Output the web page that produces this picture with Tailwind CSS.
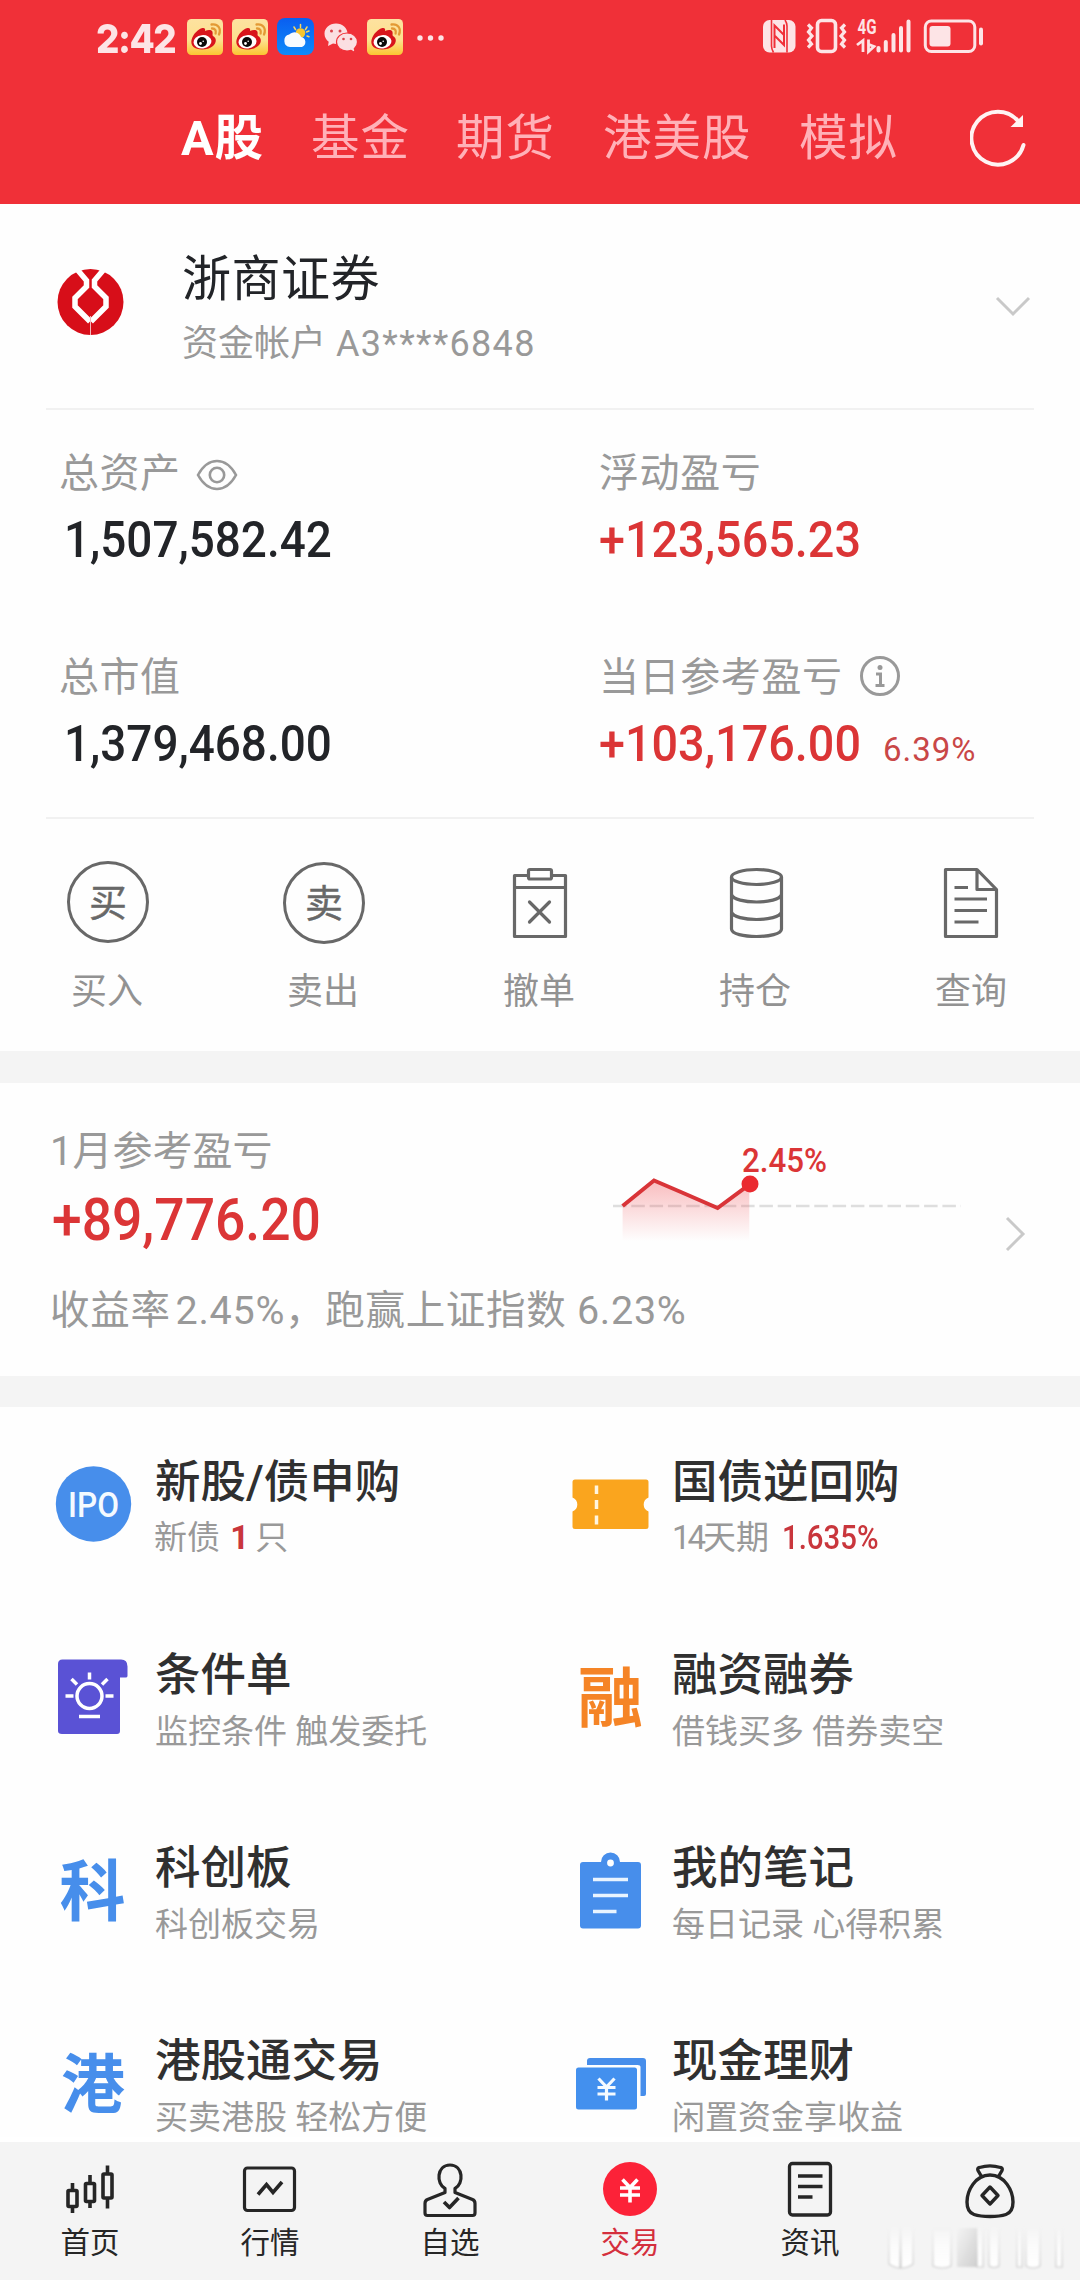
<!DOCTYPE html>
<html lang="zh-CN">
<head>
<meta charset="utf-8">
<title>交易</title>
<script src="https://cdn.jsdelivr.net/npm/@tailwindcss/browser@4"></script>
</head>
<body class="w-[1080px] h-[2280px] overflow-hidden bg-[#fefefe] font-[Roboto,'Noto_Sans_CJK_SC',sans-serif] whitespace-nowrap">
<svg width="0" height="0" class="absolute">
  <defs>
    <linearGradient id="wbg" x1="0" y1="0" x2="0" y2="1"><stop offset="0" stop-color="#fde2a0"/><stop offset=".6" stop-color="#fde08e"/><stop offset="1" stop-color="#fbc531"/></linearGradient>
    <linearGradient id="sky" x1="0" y1="0" x2="0" y2="1"><stop offset="0" stop-color="#0a5ef0"/><stop offset="1" stop-color="#0d8bfa"/></linearGradient>
    <linearGradient id="area" x1="0" y1="0" x2="0" y2="1"><stop offset="0" stop-color="#f04a50" stop-opacity=".36"/><stop offset="1" stop-color="#f04a50" stop-opacity="0"/></linearGradient>
    <symbol id="weibo" viewBox="0 0 36 36">
      <rect width="36" height="36" rx="4.5" fill="url(#wbg)"/>
      <path d="M4.500 21C6 15 11 10 15.500 9C18 8.500 18.500 10.500 18 12C21 10.500 25 10.500 25.500 13C26 15 25 16 26 17C30 19 29.500 24 26 27C21 31.500 10 31.500 6.500 28C4.500 26 4 23.500 4.500 21Z" fill="#d8151c"/>
      <ellipse cx="15.500" cy="22.800" rx="9" ry="6.700" fill="#fff" transform="rotate(-6 15.5 22.8)"/>
      <circle cx="15" cy="23" r="5" fill="#0a0a0a"/><circle cx="13.500" cy="24.500" r="1.400" fill="#fff"/><circle cx="16.200" cy="22.300" r=".8" fill="#fff"/>
      <path d="M25 9.500C28 9.300 29.500 11.500 28.600 14.500M24.500 5.500C31 4.500 34.500 9.500 32 15.500" fill="none" stroke="#e39a35" stroke-width="2.300" stroke-linecap="round"/>
    </symbol>
  </defs>
</svg>

<header class="h-[204px] bg-[#f03038]">
  <div class="flex h-[76px] items-center pl-[96px] pr-[96px] text-[#fde4e6]">
    <span class="w-[91px] text-[40px] leading-[40px] font-extrabold font-[Inter,sans-serif] tracking-[-1.6px] -translate-y-px mt-1"><span class="inline-block origin-left scale-x-[.92]">2:42</span></span>
    <svg class="w-9 h-9 mt-[-3px]"><use href="#weibo"/></svg>
    <svg class="w-9 h-9 mt-[-3px] ml-[9px]"><use href="#weibo"/></svg>
    <svg class="w-[37px] h-[37px] mt-[-3px] ml-[9px]" viewBox="0 0 37 37">
      <rect width="37" height="37" rx="8" fill="url(#sky)"/>
      <g stroke="#f5d565" stroke-width="1.500" stroke-linecap="round"><path d="M23.500 6.500v3M17 9l1.500 2.500M30 9l-1.500 2.500M30 18l2 .8M29.500 14l2.500-1"/></g>
      <circle cx="23.500" cy="15" r="4.800" fill="#f7c52f"/>
      <path d="M13 29a6.300 6.300 0 0 1-.8-12.400 7 7 0 0 1 11.800 2.400 5.200 5.200 0 0 1 1 10z" fill="#f6fbff"/>
    </svg>
    <svg class="w-[34px] h-[32px] ml-[10px] -mt-px" viewBox="0 0 34 32">
      <path d="M12 1.500C5.500 1.500.5 6 .5 11.700c0 3.400 1.700 6.200 4.200 8L4 24l5-2.500c5.500 1.500 14.500-1 14.500-9.800C23.500 6 18.500 1.500 12 1.500Z" fill="#fbdfe2"/>
      <path d="M23 11c-6 0-10.500 4-10.500 9s4.500 9 10.500 9c1.500 0 2.700-.2 4-.7l4.300 2.500-1-4C32.300 25 33.500 22.700 33.500 20c0-5-4.500-9-10.500-9Z" fill="#fbdfe2" stroke="#f03038" stroke-width="1.200"/>
      <g fill="#d9444c"><circle cx="7.500" cy="9" r="1.500"/><circle cx="16" cy="9" r="1.500"/><circle cx="19.500" cy="17" r="1.300"/><circle cx="27" cy="17" r="1.300"/></g>
    </svg>
    <svg class="w-9 h-9 mt-[-3px] ml-[9px]"><use href="#weibo"/></svg>
    <svg class="w-7 h-2 ml-[14px]" viewBox="0 0 28 8" fill="#fde4e6"><circle cx="3" cy="4" r="2.700"/><circle cx="13.500" cy="4" r="2.700"/><circle cx="24" cy="4" r="2.700"/></svg>
    <svg class="w-[224px] h-[38px] ml-auto mr-[-3px] -mt-1" viewBox="0 0 224 38" fill="none">
      <rect x="0" y="3" width="32.500" height="32.500" rx="6.500" fill="#fde4e6"/>
      <path d="M8.500 3v26q0 3 2 6.500M24 35.500V9q0-3-2-6" stroke="#f03038" stroke-width="1.600"/>
      <path d="M11.500 31V8.500l10 10M21 7.500v20.500l-9-9" stroke="#f03038" stroke-width="2"/>
      <rect x="54.500" y="3.500" width="18" height="31" rx="4" stroke="#fde4e6" stroke-width="3.600"/>
      <path d="M45 7.500l3.500 3.500-3 4 3.500 4-3.500 4 3 4-3.500 3.500M82 7.500l-3.500 3.500 3 4-3.500 4 3.500 4-3 4 3.500 3.500" stroke="#fde4e6" stroke-width="3.200"/>
      <text x="94.500" y="16.500" font-size="20" font-weight="700" font-family="Roboto" fill="#fde4e6" textLength="19" lengthAdjust="spacingAndGlyphs">4G</text>
      <path d="M94 28l6-4.500v11.500M105.500 22.500v12l5.500-5-5-2" stroke="#fde4e6" stroke-width="2.800"/>
      <path d="M115.500 31v2.500M122.800 25v8.500M130.500 18v15.500M138 11v22.500M145.500 4.500v29" stroke="#fde4e6" stroke-width="4" stroke-linecap="round"/>
      <rect x="162.300" y="4" width="49.500" height="30.500" rx="6" stroke="#fde4e6" stroke-width="3"/>
      <rect x="166.500" y="9" width="21" height="20.500" rx="3" fill="#fde4e6"/>
      <path d="M218 12.500v14" stroke="#fde4e6" stroke-width="4" stroke-linecap="round"/>
    </svg>
  </div>
  <nav class="flex items-center h-[124px] pt-[2px] pl-[181px] text-[48.500px] leading-[60px] tracking-[1px] text-[#ffb1b8]">
    <span class="text-white font-bold w-[130px]">A股</span>
    <span class="w-[145px]">基金</span>
    <span class="w-[147px]">期货</span>
    <span class="w-[196px]">港美股</span>
    <span class="w-[171px]">模拟</span>
    <svg class="w-[60px] h-[60px] -mt-[2px]" viewBox="0 0 60 60" fill="none"><path d="M53.500 37A26.500 26.500 0 1 1 48.500 13.500" stroke="#fff3f3" stroke-width="4" stroke-linecap="round"/><path d="M53 7v12H40.500z" fill="#fff3f3"/></svg>
  </nav>
</header>

<section class="h-[847px]">
  <div class="flex h-[206px] mx-[46px] border-b-2 border-[#f1f1f1]">
    <svg class="w-[68px] h-[68px] ml-[10px] mt-[64px]" viewBox="0 0 68 68">
      <circle cx="34.500" cy="34" r="33" fill="#d70e19"/>
      <path d="M22 2.500L30.500 12.500V18.500L19 30V38.500L34 53.500M47 2.500L38.500 12.500V18.500L50 30V38.500L35 53.500" fill="none" stroke="#fff" stroke-width="5.500"/>
      <path d="M34.500 48v19" stroke="#f3b6ba" stroke-width="1"/>
    </svg>
    <div class="ml-[58px] pt-[44px]">
      <div class="text-[49px] leading-[64px] text-[#222428] tracking-[.5px]">浙商证券</div>
      <div class="text-[36px] leading-[60px] text-[#999] mt-[2px]">资金帐户<span class="ml-[10px] tracking-[1.3px]">A3****6848</span></div>
    </div>
    <svg class="w-9 h-6 ml-auto mr-[3px] mt-[90px]" viewBox="0 0 36 24" fill="none" stroke="#c9c9c9" stroke-width="3"><path d="M2 4l16 16L34 4"/></svg>
  </div>

  <div class="grid grid-cols-[540px_1fr] grid-rows-[204px_1fr] mx-[46px] h-[409px] border-b-2 border-[#f1f1f1] pl-[13px]">
    <div class="pt-[37px]">
      <div class="flex items-center gap-[15px] text-[40px] leading-[54px] text-[#999] tracking-[.5px]">总资产
        <svg class="w-[42px] h-[32px] mt-px" viewBox="0 0 42 32" fill="none" stroke="#999" stroke-width="2.600"><path d="M2 16C8 5 15 2 21 2s13 3 19 14c-6 11-13 14-19 14S8 27 2 16Z"/><circle cx="21" cy="16" r="7.200"/></svg>
      </div>
      <div class="mt-[7px] pl-[5px] text-[50px] leading-[64px] font-medium text-[#222428]"><span class="inline-block origin-left scale-x-[.917]">1,507,582.42</span></div>
    </div>
    <div class="pt-[37px]">
      <div class="text-[40px] leading-[54px] text-[#999] tracking-[.6px]">浮动盈亏</div>
      <div class="mt-[7px] text-[50px] leading-[64px] font-medium text-[#db3536]"><span class="inline-block origin-left scale-x-[.935]">+123,565.23</span></div>
    </div>
    <div class="pt-[37px]">
      <div class="text-[40px] leading-[54px] text-[#999] tracking-[.5px]">总市值</div>
      <div class="mt-[7px] pl-[5px] text-[50px] leading-[64px] font-medium text-[#222428]"><span class="inline-block origin-left scale-x-[.917]">1,379,468.00</span></div>
    </div>
    <div class="pt-[37px]">
      <div class="flex items-center gap-[16px] text-[40px] leading-[54px] text-[#999] tracking-[.6px]">当日参考盈亏
        <svg class="w-[42px] h-[42px] -mt-1" viewBox="0 0 42 42" fill="none" stroke="#999" stroke-width="3"><circle cx="21" cy="21" r="18.500"/><path d="M17 19h4.500v11M16.500 30.500h9"/><circle cx="21" cy="12.500" r="2.500" fill="#999" stroke="none"/></svg>
      </div>
      <div class="flex items-baseline mt-[7px] text-[50px] leading-[64px] font-medium text-[#db3536]"><span class="w-[284px]"><span class="inline-block origin-left scale-x-[.935]">+103,176.00</span></span><span class="text-[33px] font-normal text-[#c94747] tracking-[1px]">6.39%</span></div>
    </div>
  </div>

  <div class="grid grid-cols-5 pt-[39px] text-center text-[36px] leading-[50px] text-[#929292] [&_svg]:mx-auto [&_svg]:mb-[21px]">
    <div><svg class="w-[88px] h-[88px]" viewBox="0 0 88 88"><circle cx="44" cy="44" r="39.500" fill="none" stroke="#686868" stroke-width="3"/><text x="44" y="58" text-anchor="middle" font-size="38" fill="#686868" stroke="#686868" stroke-width=".4">买</text></svg><span class="-ml-[2px]">买入</span></div>
    <div><svg class="w-[88px] h-[88px]" viewBox="0 0 88 88"><circle cx="44" cy="45" r="39.500" fill="none" stroke="#686868" stroke-width="3"/><text x="44" y="59" text-anchor="middle" font-size="38" fill="#686868" stroke="#686868" stroke-width=".4">卖</text></svg><span class="-ml-[2px]">卖出</span></div>
    <div><svg class="w-[88px] h-[88px]" viewBox="0 0 88 88" fill="none" stroke="#686868" stroke-width="3.200"><path d="M31.500 17.500H18.500v61h51v-61H57M18.500 29.500h51M33.500 44l20 20M53.500 44l-20 20" stroke-linejoin="round" stroke-linecap="round"/><rect x="32.500" y="11.500" width="23" height="9.500" rx="1.500"/></svg><span class="-ml-[2px]">撤单</span></div>
    <div><svg class="w-[88px] h-[88px]" viewBox="0 0 88 88" fill="none" stroke="#686868" stroke-width="3.200"><ellipse cx="44.500" cy="19" rx="25" ry="7.500"/><path d="M19.500 19v52c0 10 50 10 50 0V19M19.500 36.500c3 10 47 10 50 0M19.500 54c3 10 47 10 50 0"/></svg><span class="-ml-[2px]">持仓</span></div>
    <div><svg class="w-[88px] h-[88px]" viewBox="0 0 88 88" fill="none" stroke="#686868" stroke-width="3.200" stroke-linejoin="round"><path d="M17.500 11.500H49L68.500 31.500V78.500H17.500zM49 11.500v20h19.500M26.500 29.500h13.500M26.500 41h32.500M26.500 52.500h32.500M26.500 64h24"/></svg><span class="-ml-[2px]">查询</span></div>
  </div>
</section>

<section class="h-[356px] border-t-[32px] border-b-[31px] border-[#f4f4f4] box-border flex items-start">
  <div class="w-[570px] pl-[50px] pt-[40px]">
    <div class="text-[40px] leading-[58px] text-[#999]">1月参考盈亏</div>
    <div class="mt-[2px] pl-[2px] text-[59px] leading-[74px] font-medium text-[#db3536]"><span class="inline-block origin-left scale-x-[.905]">+89,776.20</span></div>
    <div class="mt-[24px] text-[39.500px] leading-[60px] text-[#999] tracking-[.7px]">收益率<span class="ml-[5px]">2.45%</span>，跑赢上证指数 <span>6.23%</span></div>
  </div>
  <svg class="w-[360px] h-[120px] ml-[38px] mt-[47px]" viewBox="608 1130 360 120">
    <path d="M613 1206H961" stroke="#dedede" stroke-width="2.500" stroke-dasharray="13.500 4.800"/>
    <path d="M622.600 1207L654 1181L682 1193.500L717.600 1209.500L749.300 1185.700V1241H622.600z" fill="url(#area)"/>
    <path d="M622.600 1206L654 1180.500L682 1192.500L717.600 1208L749.300 1184.700" fill="none" stroke="#d93438" stroke-width="4"/>
    <circle cx="750" cy="1184" r="8.500" fill="#ea2a30"/>
    <text x="742" y="1172" font-size="33" font-weight="500" font-family="Roboto" fill="#db3536" textLength="85" lengthAdjust="spacingAndGlyphs">2.45%</text>
  </svg>
  <svg class="w-6 h-9 ml-[36px] mt-[133px]" viewBox="0 0 24 36" fill="none" stroke="#c9c9c9" stroke-width="3"><path d="M3 2l16 16L3 34"/></svg>
</section>

<main class="grid grid-cols-[517px_1fr] auto-rows-[193px] h-[730px] overflow-hidden text-[33px] leading-[54px] text-[#999]">
  <div class="flex pl-[53px]">
    <svg class="w-[80px] h-[80px] mt-[57px]" viewBox="0 0 80 80"><circle cx="40.500" cy="40" r="37.700" fill="#478eeb"/><text x="40.500" y="52.500" text-anchor="middle" font-size="35" font-weight="500" font-family="Roboto" fill="#f4faff" textLength="51" lengthAdjust="spacingAndGlyphs">IPO</text></svg>
    <div class="ml-[22px] pt-[47px]"><div class="text-[45.500px] leading-[58px] font-medium text-[#303030]">新股/债申购</div><div class="-mt-px -ml-px">新债 <b class="font-bold text-[#c9363c] ml-[2px] mr-[-2px]">1</b> 只</div></div>
  </div>
  <div class="flex pl-[53px]">
    <svg class="w-[80px] h-[80px] mt-[57px]" viewBox="0 0 80 80"><path d="M5 15.500H76q2.500 0 2.500 2.500V33.500a7.500 7.500 0 0 0 0 14V62.500q0 2.500-2.500 2.500H5q-2.500 0-2.500-2.500V47.500a7.500 7.500 0 0 0 0-14V18Q2.500 15.500 5 15.500Z" fill="#faa51e"/><path d="M26.500 21.500v8.500M26.500 36v9M26.500 51.500v9" stroke="#fff5df" stroke-width="3.500"/></svg>
    <div class="ml-[22px] pt-[47px]"><div class="text-[45.500px] leading-[58px] font-medium text-[#303030]">国债逆回购</div><div class="-mt-px"><span class="tracking-[-3px]">14</span>天期 <b class="inline-block origin-left scale-x-[.89] font-medium text-[#c9363c] ml-[5px]">1.635%</b></div></div>
  </div>
  <div class="flex pl-[53px]">
    <svg class="w-[80px] h-[80px] mt-[57px]" viewBox="0 0 80 80"><path d="M9.500 2.500H68q6.500 0 6.500 7V19q0 1.500-2 1.500h-5.500V74q0 3-3 3H9q-4 0-4-3V7q0-4.500 4.500-4.500Z" fill="#5a52d5"/><g fill="none" stroke="#fff" stroke-width="3.500"><circle cx="36.500" cy="39" r="12.500"/><path d="M36.500 15.500v7M18.500 22l5.500 5.500M54.500 22l-5.500 5.500M12.500 39h8M52.500 39h8M26 59.500h21"/></g></svg>
    <div class="ml-[22px] pt-[47px]"><div class="text-[45.500px] leading-[58px] font-medium text-[#303030]">条件单</div>监控条件 触发委托</div>
  </div>
  <div class="flex pl-[53px]">
    <svg class="w-[80px] h-[80px] mt-[57px]" viewBox="0 0 80 80"><text x="40.500" y="64" text-anchor="middle" font-size="65" font-weight="700" fill="#f58426">融</text></svg>
    <div class="ml-[22px] pt-[47px]"><div class="text-[45.500px] leading-[58px] font-medium text-[#303030]">融资融券</div>借钱买多 借券卖空</div>
  </div>
  <div class="flex pl-[53px]">
    <svg class="w-[80px] h-[80px] mt-[57px]" viewBox="0 0 80 80"><text x="39.500" y="65" text-anchor="middle" font-size="66" font-weight="700" fill="#478eeb">科</text></svg>
    <div class="ml-[22px] pt-[47px]"><div class="text-[45.500px] leading-[58px] font-medium text-[#303030]">科创板</div>科创板交易</div>
  </div>
  <div class="flex pl-[53px]">
    <svg class="w-[80px] h-[80px] mt-[57px]" viewBox="0 0 80 80"><path d="M13 12H31a9.500 9.500 0 0 1 19 0H68q3 0 3 3V75.500q0 3-3 3H13q-3 0-3-3V15q0-3 3-3Z" fill="#478eeb"/><circle cx="40.500" cy="13" r="3.400" fill="#fff"/><path d="M23 29.500h35M23 45.500h35M23 61.500h23.500" stroke="#e9f4ff" stroke-width="3.300"/></svg>
    <div class="ml-[22px] pt-[47px]"><div class="text-[45.500px] leading-[58px] font-medium text-[#303030]">我的笔记</div>每日记录 心得积累</div>
  </div>
  <div class="flex pl-[53px]">
    <svg class="w-[80px] h-[80px] mt-[57px]" viewBox="0 0 80 80"><text x="40" y="64" text-anchor="middle" font-size="64" font-weight="700" fill="#478eeb">港</text></svg>
    <div class="ml-[22px] pt-[47px]"><div class="text-[45.500px] leading-[58px] font-medium text-[#303030]">港股通交易</div>买卖港股 轻松方便</div>
  </div>
  <div class="flex pl-[53px]">
    <svg class="w-[80px] h-[80px] mt-[57px]" viewBox="0 0 80 80"><path d="M17 22v-4q0-3 3-3H73q3 0 3 3V51q0 2-2 2h-3.500V24q0-2-3-2z" fill="#478eeb"/><rect x="6" y="24.500" width="61" height="42" rx="2.500" fill="#4390ee"/><path d="M28.500 35.500l8 8.500 8-8.500M36.500 43v14.500M27.500 44.500h18M27.500 51h18" fill="none" stroke="#f4faff" stroke-width="3.200"/></svg>
    <div class="ml-[22px] pt-[47px]"><div class="text-[45.500px] leading-[58px] font-medium text-[#303030]">现金理财</div>闲置资金享收益</div>
  </div>
</main>

<footer class="relative h-[143px] border-t-[5px] border-white bg-[#f4f4f4] grid grid-cols-6 pt-[17px] text-center text-[29.500px] leading-[44px] text-[#262626] [&_svg]:mx-auto [&_svg]:mb-[-2px]">
  <div><svg class="w-[64px] h-[64px]" viewBox="0 0 64 64" fill="none" stroke="#262626" stroke-width="3.600"><rect x="10" y="31.500" width="9" height="16" rx="1"/><rect x="27.500" y="24.500" width="9" height="18" rx="1"/><rect x="45" y="15" width="9" height="24" rx="1"/><path d="M14.500 24v7M14.500 48v6M32 16v8M32 43v6M49.500 6.500v8M49.500 39v10.500"/></svg>首页</div>
  <div><svg class="w-[64px] h-[64px]" viewBox="0 0 64 64" fill="none" stroke="#262626" stroke-width="3.200"><rect x="6.500" y="9" width="50" height="42.500" rx="3"/><path d="M20 35.500l8.500-10L35 33.500l9-10.500" stroke-width="3.600"/></svg>行情</div>
  <div><svg class="w-[64px] h-[64px]" viewBox="0 0 64 64" fill="none" stroke="#262626" stroke-width="3.200" stroke-linejoin="round"><path d="M27 29.500C18 25 18.500 6 32 6s14 19 5 23.500v4l17.500 7q2.500 1 2.500 4V54q0 2.500-2.500 2.500H9.500Q7 56.500 7 54V44.500q0-3 2.500-4l17.500-7z"/><path d="M26 43l5.500 5.500L40.500 39" stroke-width="3.600"/></svg>自选</div>
  <div class="text-[#d42f3d]"><svg class="w-[64px] h-[64px]" viewBox="0 0 64 64"><circle cx="32" cy="30" r="27" fill="#fc2238"/><path d="M24.500 20.500l7.500 8 7.500-8M32 28v15.500M22 29h20M22 36h20" fill="none" stroke="#fff" stroke-width="3.600"/></svg>交易</div>
  <div><svg class="w-[64px] h-[64px]" viewBox="0 0 64 64" fill="none" stroke="#262626" stroke-width="3.300"><rect x="11.500" y="4.500" width="41" height="51.500" rx="3"/><path d="M20 17h24.500M20 27.500h24.500M20 38h14.500"/></svg>资讯</div>
  <div><svg class="w-[64px] h-[64px]" viewBox="0 0 64 64" fill="none" stroke="#262626" stroke-width="3.400" stroke-linejoin="round"><path d="M23.500 17.500l-3.500-6q-1-2.500 1.500-3C28 6.500 36 6.500 42.500 8.500q2.500.5 1.500 3l-3.500 6M32 16C17 16 9 32 9 43q0 10 7 12.500c8 2.700 24 2.700 32 0Q55 53 55 43C55 32 47 16 32 16Z"/><path d="M32 28l8 8.500-8 8.500-8-8.500z" stroke-width="3.400"/></svg></div>
  <svg class="absolute left-[884px] top-[80px] w-[190px] h-[52px]" viewBox="0 0 190 52">
    <defs>
      <linearGradient id="fade" x1="0" y1="0" x2="0" y2="1"><stop offset="0" stop-color="#fff" stop-opacity="0"/><stop offset=".5" stop-color="#fff" stop-opacity=".7"/><stop offset="1" stop-color="#fff"/></linearGradient>
      <linearGradient id="edge" x1="0" y1="0" x2="0" y2="1"><stop offset="0" stop-color="#bbb" stop-opacity="0"/><stop offset="1" stop-color="#bbb" stop-opacity=".8"/></linearGradient>
      <linearGradient id="shade" x1="0" y1="0" x2="1" y2="1"><stop offset="0" stop-color="#f4f4f4"/><stop offset="1" stop-color="#cfcfcf"/></linearGradient>
      <filter id="soft"><feGaussianBlur stdDeviation="1.200"/></filter>
    </defs>
    <g filter="url(#soft)">
      <rect x="73" y="6" width="20" height="39" fill="url(#shade)"/>
      <g fill="url(#fade)" stroke="url(#edge)" stroke-width="1.200"><path d="M5 5V42q6 4 11 4V5zM17 5V46q7 0 12-4V5zM49 8V44q9 4 18 0V8zM93 5V45h6V5zM105 4V44q5 3 10 0V4zM133 6V45h5V6zM142 6V44q7 4 14 0V6zM172 6V45h6V6z"/></g>
    </g>
  </svg>
</footer>
</body>
</html>
